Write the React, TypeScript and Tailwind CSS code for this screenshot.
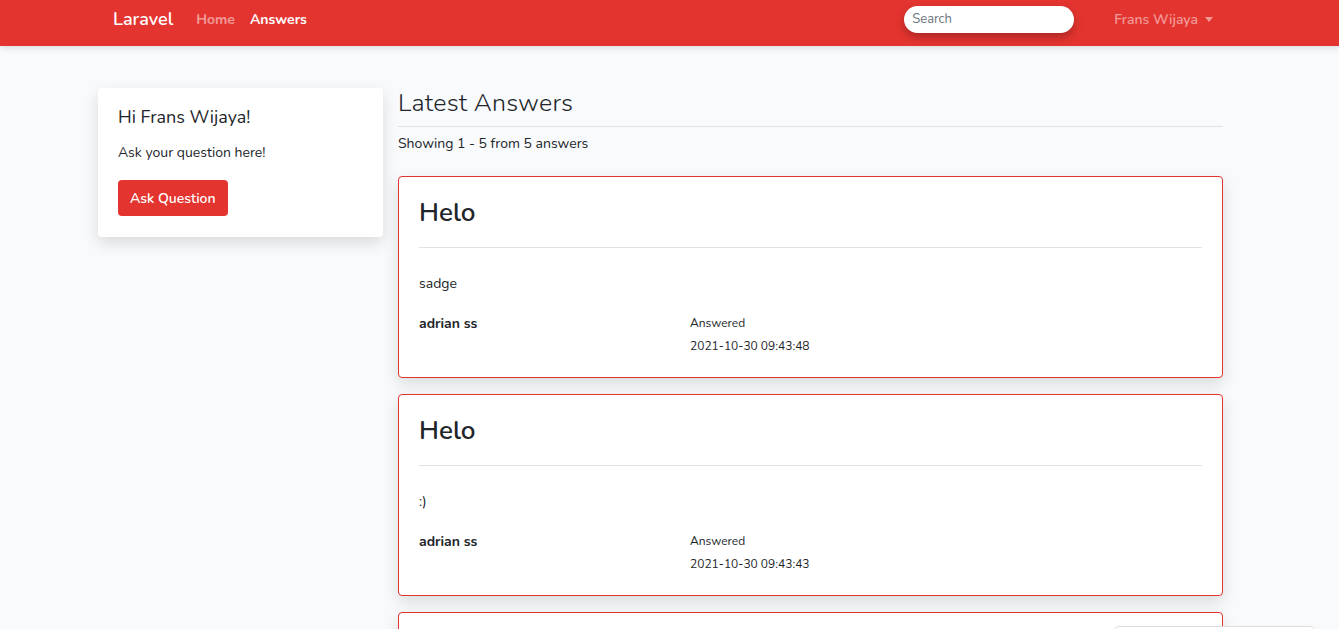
type Answer = { title: string; body: string; user: string; date: string };

const answers: Answer[] = [
  { title: "Helo", body: "sadge", user: "adrian ss", date: "2021-10-30 09:43:48" },
  { title: "Helo", body: ":)", user: "adrian ss", date: "2021-10-30 09:43:43" },
];

const cardBox =
  "bg-white border border-[#e3342f] rounded-[4px] shadow-[0_6px_16px_rgba(0,0,0,0.13)] h-[202px] shrink-0";

const AnswerCard = ({ a }: { a: Answer }) => (
  <div className={`${cardBox} px-5 pt-[20px]`}>
    <h2 className="text-[26px] leading-[32px] font-semibold text-[#212529]">{a.title}</h2>
    <hr className="mt-[18px] border-t border-[#e2e3e5]" />
    <p className="mt-[27px] text-[14px] leading-[17px] text-[#212529]">{a.body}</p>
    <div className="mt-[23px] flex">
      <div className="w-[271px] text-[14px] leading-[17px] font-bold text-[#212529]">{a.user}</div>
      <div className="text-[12px] text-[#212529]">
        <p className="leading-[17px]">Answered</p>
        <p className="mt-[6px] leading-[17px]">{a.date}</p>
      </div>
    </div>
  </div>
);

export default function App() {
  return (
    <div className="h-[629px] overflow-hidden bg-[#f8fafc] font-['Nunito','Open_Sans',sans-serif] text-[#212529]">
      <nav className="relative z-10 h-[46px] bg-[#e3342f] shadow-[0_2px_6px_rgba(0,0,0,0.12)]">
        <div className="flex items-center h-[39px] pl-[113px] pr-[126px]">
          <span className="text-[18px] text-white font-semibold mr-[23px]">Laravel</span>
          <span className="text-[14px] font-bold text-white/50 mr-[15px]">Home</span>
          <span className="text-[14px] font-bold text-white">Answers</span>
          <div className="flex-1" />
          <div className="w-[170px] h-[27px] rounded-full bg-white shadow-[0_4px_8px_rgba(0,0,0,0.25)] flex items-center pl-[8px] text-[13px] text-[#6c757d]">
            Search
          </div>
          <div className="ml-[40px] flex items-center text-[14px] font-semibold text-white/50">
            Frans Wijaya
            <span className="ml-[7px] w-0 h-0 border-l-[4px] border-r-[4px] border-t-[5px] border-l-transparent border-r-transparent border-t-white/50" />
          </div>
        </div>
      </nav>

      <main className="flex gap-[15px] pl-[98px] pt-[42px]">
        <aside className="w-[285px] shrink-0">
          <div className="bg-white rounded-[4px] shadow-[0_6px_16px_rgba(0,0,0,0.13)] px-5 pt-[18px] pb-[21px]">
            <h3 className="text-[18px] leading-[22px] text-[#212529]">Hi Frans Wijaya!</h3>
            <p className="mt-[16px] text-[14px] leading-[17px]">Ask your question here!</p>
            <button className="mt-[19px] h-[36px] px-[12px] bg-[#e3342f] rounded-[4px] text-white text-[14px] font-semibold">
              Ask Question
            </button>
          </div>
        </aside>

        <section className="w-[825px] flex flex-col">
          <h1 className="text-[25px] leading-[30px] font-light tracking-[0.2px]">Latest Answers</h1>
          <hr className="mt-[8px] border-t border-[#dee2e6]" />
          <p className="mt-[8px] text-[14px] leading-[17px]">Showing 1 - 5 from 5 answers</p>
          <div className="mt-[24px] flex flex-col gap-[16px]">
            {answers.map((a, i) => (
              <AnswerCard key={i} a={a} />
            ))}
            <div className={cardBox} />
          </div>
        </section>
      </main>

      <div className="fixed left-[1113px] top-[626px] w-[203px] h-[40px] rounded-[6px] border border-[#dcdcdc] bg-white" />
    </div>
  );
}
